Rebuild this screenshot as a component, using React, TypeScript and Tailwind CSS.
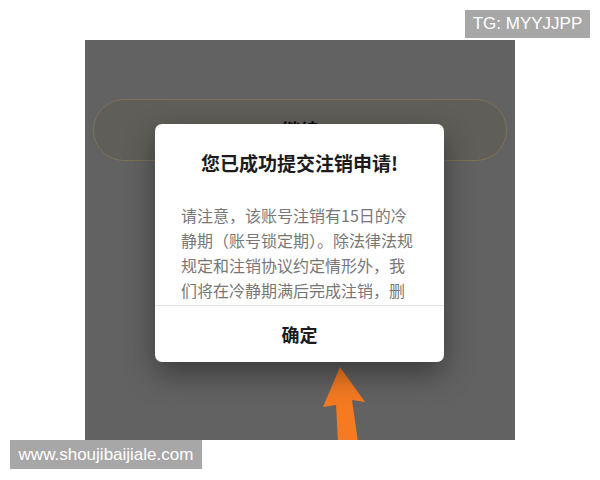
import React from "react";

const cjk = { fontFamily: '"Noto Sans CJK SC", "Noto Sans", sans-serif' };
const latin = { fontFamily: '"Liberation Sans", Arial, sans-serif' };

export default function App() {
  const lines = [
    "请注意，该账号注销有15日的冷",
    "静期（账号锁定期）。除法律法规",
    "规定和注销协议约定情形外，我",
    "们将在冷静期满后完成注销，删",
  ];
  return (
    <div className="relative w-[600px] h-[480px] bg-white overflow-hidden">
      <div className="ml-[85px] pt-[40px]">
        <div className="relative w-[430px] h-[400px] bg-[#626262] overflow-hidden">
          <div className="pt-[59px] px-[8px]">
            <div className="h-[62px] rounded-full border border-[#7d7256] bg-[#605e59] flex items-center justify-center">
              <span className="text-[19px] font-bold text-[#0a0a0a]" style={cjk}>继续</span>
            </div>
          </div>

          <svg className="absolute left-[230px] top-[322px]" width="60" height="80" viewBox="0 0 60 80">
            <path d="M25 5 L50 40 L37 38 L43 80 L23 80 L21 43 L8 45 Z" fill="#f57a22" />
          </svg>

          <div
            className="absolute left-[70px] top-[84px] w-[289px] h-[238px] bg-white rounded-[7px] flex flex-col shadow-[0_12px_30px_rgba(0,0,0,0.4)]"
            style={cjk}
          >
            <div className="pt-[28px] text-center text-[19px] leading-[22px] font-bold text-[#1c1c1c]">
              您已成功提交注销申请!
            </div>
            <div className="mt-[29px] pl-[26px] h-[102px] overflow-hidden text-[16px] leading-[25px] text-[#777777]">
              {lines.map((l) => (
                <div key={l} className="whitespace-nowrap">{l}</div>
              ))}
            </div>
            <div className="border-t border-[#e4e4e4] flex-1 flex items-center justify-center">
              <span className="text-[18px] font-bold text-[#1c1c1c]">确定</span>
            </div>
          </div>
        </div>
      </div>

      <div
        className="absolute left-[465px] top-[10px] w-[125px] h-[28px] bg-[#a7a7a7] text-white text-[17px] flex items-center justify-center"
        style={latin}
      >
        TG: MYYJJPP
      </div>
      <div
        className="absolute left-[10px] top-[440px] w-[192px] h-[29px] bg-[#a7a7a7] text-white text-[17px] flex items-center justify-center"
        style={latin}
      >
        www.shoujibaijiale.com
      </div>
    </div>
  );
}
